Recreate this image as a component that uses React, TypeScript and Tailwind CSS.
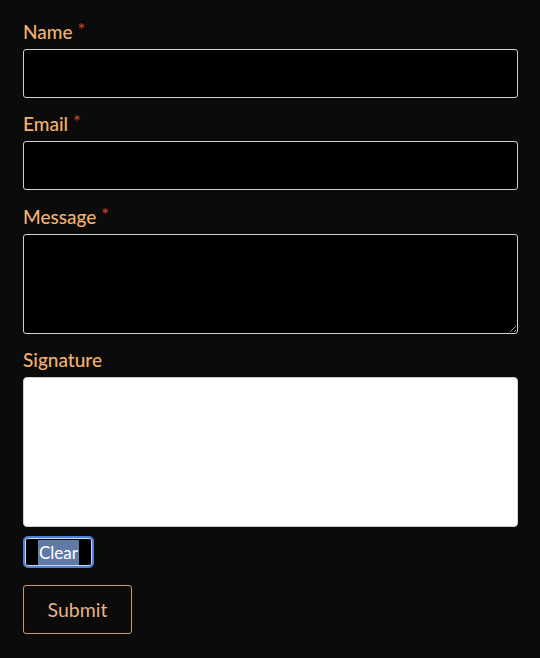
import React from "react"

function Label({ text, required }: { text: string; required?: boolean }) {
  return (
    <label className="block text-[19px] leading-[24px] font-medium text-[#f2b26f] mb-[5px]">
      {text}
      {required && (
        <span className="relative -top-[3px] ml-[5px] text-[18px] leading-none text-[#c8442c]">*</span>
      )}
    </label>
  )
}

export default function App() {
  return (
    <div
      className="min-h-[658px] bg-[#0b0b0b] pl-[23px] pr-[22px] pt-[20px] pb-6"
      style={{ fontFamily: "Lato, 'Noto Sans', sans-serif" }}
    >
      <form className="flex flex-col" onSubmit={(e) => e.preventDefault()}>
        <div className="mb-[14px]">
          <Label text="Name" required />
          <input className="block w-full h-[49px] bg-black border border-[#d0d0d0] rounded-[3px] px-3 text-white outline-none" />
        </div>
        <div className="mb-[15px]">
          <Label text="Email" required />
          <input className="block w-full h-[49px] bg-black border border-[#d0d0d0] rounded-[3px] px-3 text-white outline-none" />
        </div>
        <div className="mb-[14px]">
          <Label text="Message" required />
          <textarea className="block w-full h-[100px] bg-black border border-[#d0d0d0] rounded-[3px] px-3 py-2 text-white outline-none" />
        </div>
        <div>
          <Label text="Signature" />
          <div className="w-full h-[150px] bg-white rounded-[4px] border border-[#d0d0d0]" />
        </div>
        <div className="mt-[9px]">
          <button
            type="button"
            className="h-[32px] w-[71px] bg-black rounded-[5px] border-2 border-[#4f80d6] ring-1 ring-inset ring-[#c9d6ee] text-white text-[17px] leading-none"
          >
            <span className="bg-[#5f7aa6] px-[1px] py-[2px]">Clear</span>
          </button>
        </div>
        <div className="mt-[17px]">
          <button
            type="submit"
            className="h-[49px] w-[109px] bg-[#0b0b0b] rounded-[3px] border border-[#c79a70] text-[#e6b28c] text-[19.5px]"
          >
            Submit
          </button>
        </div>
      </form>
    </div>
  )
}
